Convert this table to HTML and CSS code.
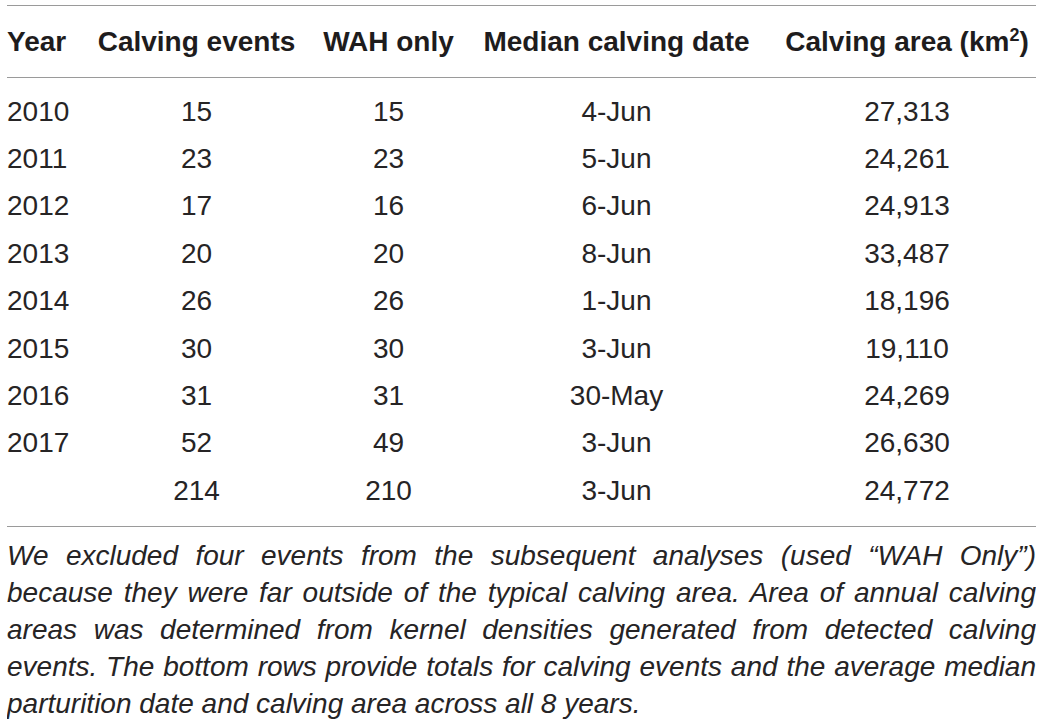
FILE: index.html
```html
<!DOCTYPE html>
<html lang="en">

<head>
    <meta charset="utf-8">
    <meta name="viewport" content="width=device-width, initial-scale=1.0">
    <title>Calving table</title>

    <link rel="stylesheet" href="styles.css">

</head>

<body>

    <table class="tabel">
        <colgroup>
            <col class="kol-aar">
            <col class="kol-events">
            <col class="kol-wah">
            <col class="kol-dato">
            <col class="kol-areal">
        </colgroup>
        <thead>
            <tr>
                <th class="venstre">Year</th>
                <th>Calving events</th>
                <th>WAH only</th>
                <th>Median calving date</th>
                <th class="sidste">Calving area (km<sup>2</sup>)</th>
            </tr>
        </thead>
        <tbody>
            <tr class="foerste"><td class="venstre">2010</td><td>15</td><td>15</td><td>4-Jun</td><td class="sidste">27,313</td></tr>
            <tr><td class="venstre">2011</td><td>23</td><td>23</td><td>5-Jun</td><td class="sidste">24,261</td></tr>
            <tr><td class="venstre">2012</td><td>17</td><td>16</td><td>6-Jun</td><td class="sidste">24,913</td></tr>
            <tr><td class="venstre">2013</td><td>20</td><td>20</td><td>8-Jun</td><td class="sidste">33,487</td></tr>
            <tr><td class="venstre">2014</td><td>26</td><td>26</td><td>1-Jun</td><td class="sidste">18,196</td></tr>
            <tr><td class="venstre">2015</td><td>30</td><td>30</td><td>3-Jun</td><td class="sidste">19,110</td></tr>
            <tr><td class="venstre">2016</td><td>31</td><td>31</td><td>30-May</td><td class="sidste">24,269</td></tr>
            <tr><td class="venstre">2017</td><td>52</td><td>49</td><td>3-Jun</td><td class="sidste">26,630</td></tr>
            <tr class="total"><td class="venstre"></td><td>214</td><td>210</td><td>3-Jun</td><td class="sidste">24,772</td></tr>
        </tbody>
    </table>

    <p class="note">
        <span class="linje">We excluded four events from the subsequent analyses (used “WAH Only”)</span>
        <span class="linje">because they were far outside of the typical calving area. Area of annual calving</span>
        <span class="linje">areas was determined from kernel densities generated from detected calving</span>
        <span class="linje">events. The bottom rows provide totals for calving events and the average median</span>
        <span class="linje sidste-linje">parturition date and calving area across all 8 years.</span>
    </p>

</body>

</html>
```

FILE: styles.css
```css
body {
    margin: 5px 5px 0 7px;
    background: white;
    color: #262425;
    font-family: "Liberation Sans", Arial, sans-serif;
}

.tabel {
    width: 1029px;
    border-collapse: collapse;
    table-layout: fixed;
    border-top: 1px solid #9a9a9a;
    border-bottom: 1px solid #9a9a9a;
}

.kol-aar {
    width: 76px;
}

.kol-events {
    width: 227px;
}

.kol-wah {
    width: 157px;
}

.kol-dato {
    width: 299px;
}

.kol-areal {
    width: 270px;
}

th {
    font-size: 28px;
    font-weight: bold;
    color: #1e1c1d;
    height: 71px;
    padding: 0;
    text-align: center;
    white-space: nowrap;
    border-bottom: 1px solid #9a9a9a;
}

th sup {
    font-size: 18px;
    line-height: 0;
    vertical-align: 10px;
}

td {
    font-size: 28px;
    height: 47.4px;
    padding: 0;
    text-align: center;
}

.venstre {
    text-align: left;
}

.sidste {
    padding-left: 12px;
}

.foerste td {
    padding-top: 10px;
}

.total td {
    padding-bottom: 11px;
}

.note {
    margin: 0;
    width: 1029px;
    font-size: 28px;
    font-style: italic;
    line-height: 37px;
    padding-top: 10px;
}

.linje {
    display: block;
    text-align: justify;
    text-align-last: justify;
}

.sidste-linje {
    text-align-last: left;
}
```
